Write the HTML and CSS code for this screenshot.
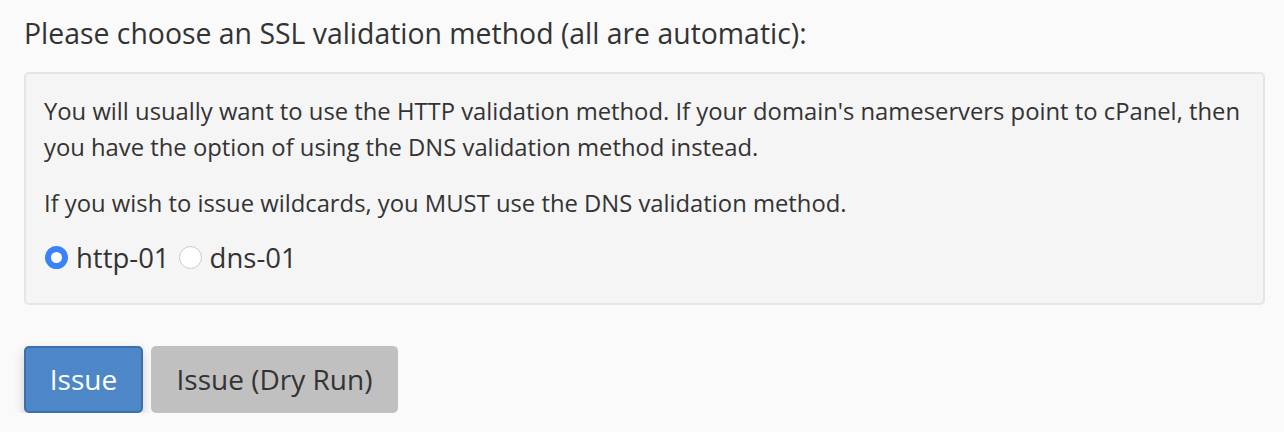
FILE: index.html
```html
<!DOCTYPE html>
<html lang="en">
<head>
<meta charset="utf-8">
<title>SSL validation method</title>
<link rel="stylesheet" href="styles.css">
</head>
<body>
<div class="page">
  <p class="heading">Please choose an SSL validation method (all are automatic):</p>
  <div class="well">
    <p class="para">You will usually want to use the HTTP validation method. If your domain's nameservers point to cPanel, then you have the option of using the DNS validation method instead.</p>
    <p class="para last">If you wish to issue wildcards, you MUST use the DNS validation method.</p>
    <div class="radios">
      <label class="radio"><span class="dot checked"></span><span class="radio-text">http-01</span></label>
      <label class="radio"><span class="dot"></span><span class="radio-text">dns-01</span></label>
    </div>
  </div>
  <div class="actions">
    <button class="btn btn-primary">Issue</button>
    <button class="btn btn-default">Issue (Dry Run)</button>
  </div>
</div>
</body>
</html>
```
FILE: styles.css
```css
html, body {
  margin: 0;
  padding: 0;
  background: #fafafa;
}
body {
  font-family: "Open Sans", "Liberation Sans", sans-serif;
  color: #333333;
}
.page {
  padding: 15px 19px 0 24px;
}
.heading {
  margin: 0;
  font-size: 28.4px;
  line-height: 36px;
}
.well {
  margin-top: 21px;
  background: #f5f5f5;
  border: 2px solid #e5e5e5;
  border-radius: 5px;
  padding: 19px 17px 28px 18px;
}
.para {
  margin: 0 0 20px 0;
  font-size: 23.8px;
  line-height: 36px;
}
.para.last {
  margin-bottom: 18px;
}
.radios {
  display: flex;
  align-items: center;
  height: 36px;
  font-size: 27.5px;
}
.radio {
  display: flex;
  align-items: center;
  margin-right: 8px;
}
.dot {
  box-sizing: border-box;
  width: 23px;
  height: 23px;
  border-radius: 50%;
  background: #ffffff;
  border: 1px solid #c8c8c8;
  margin-right: 8px;
  margin-left: 1px;
}
.dot.checked {
  border: 6.5px solid #3a82f7;
  background: #ffffff;
}
.actions {
  display: flex;
  gap: 8px;
  margin-top: 41px;
}
.btn {
  font-family: "Open Sans", "Liberation Sans", sans-serif;
  font-size: 28px;
  height: 67px;
  border-radius: 5px;
  padding: 0 20px 1px;
}
.btn-primary {
  width: 119px;
  background: #4d87c8;
  border: 2px solid #3c6fab;
  color: #ffffff;
  box-shadow: 0 5px 12px rgba(0, 0, 0, 0.18);
}
.btn-default {
  width: 247px;
  background: #c0c0c0;
  border: none;
  color: #333333;
}
```
